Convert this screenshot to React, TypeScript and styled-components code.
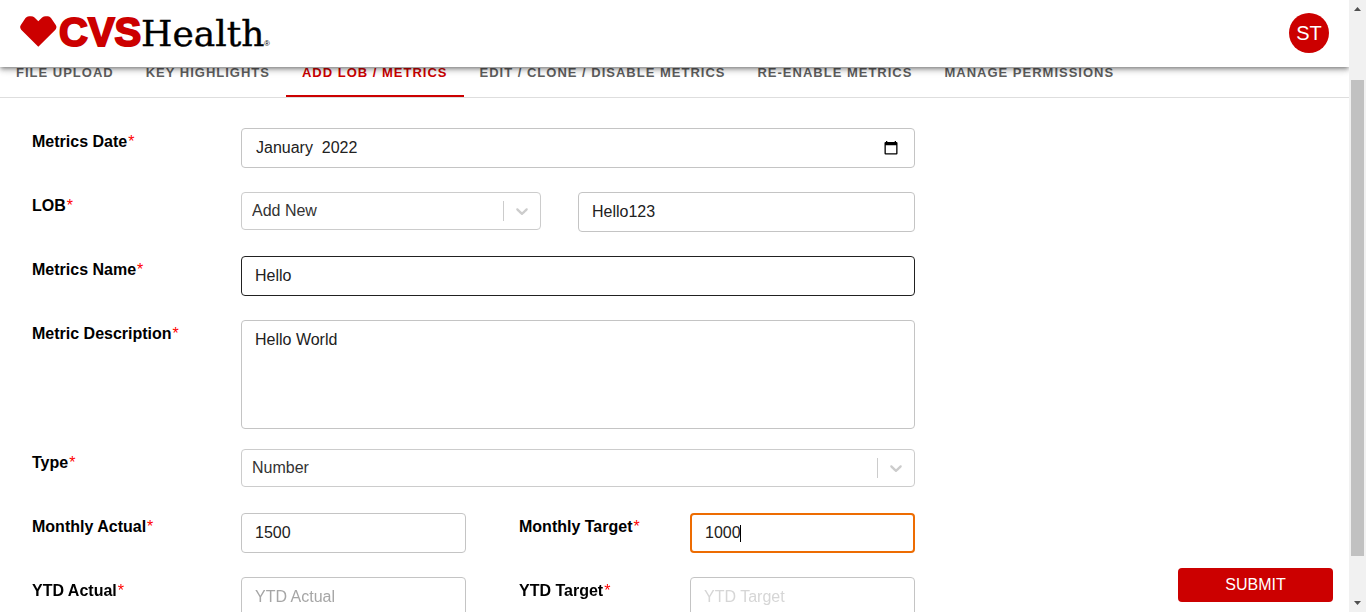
import React, { useEffect, useRef, useState } from "react";
import styled, { createGlobalStyle, css } from "styled-components";

const GlobalStyle = createGlobalStyle`
  *, *::before, *::after { box-sizing: border-box; }
  body {
    margin: 0;
    background: #fff;
    color: #000;
    font-family: "Liberation Sans", Arial, Helvetica, sans-serif;
    font-size: 16px;
  }
`;

const Window = styled.div`
  display: flex;
  height: 100vh;
  overflow: hidden;
`;

const Page = styled.div`
  display: flex;
  flex-direction: column;
  flex: 1;
  min-width: 0;
  overflow: hidden;
`;

const Header = styled.header`
  position: relative;
  z-index: 1;
  display: flex;
  flex: none;
  align-items: center;
  justify-content: space-between;
  height: 67px;
  padding: 0 20px 1px;
  background: #fff;
  box-shadow: 0 2px 4px -1px rgba(0, 0, 0, 0.4), 0 4px 5px 0 rgba(0, 0, 0, 0.14),
    0 1px 10px 0 rgba(0, 0, 0, 0.12);
`;

const LogoLink = styled.a`
  display: block;
  height: 60px;
`;

const Avatar = styled.button`
  width: 40px;
  height: 40px;
  padding: 0;
  border: 0;
  border-radius: 50%;
  background: #c00;
  color: #fff;
  font: inherit;
  font-size: 20px;
`;

const Tabs = styled.nav`
  display: flex;
  flex: none;
  height: 50px;
  margin-top: -19px;
  border-bottom: 1px solid #dedede;
`;

const Tab = styled.button<{ $active?: boolean }>`
  padding: 0 16px;
  border: 0;
  border-top: 2px solid transparent;
  border-bottom: 2px solid ${(p) => (p.$active ? "#c00" : "transparent")};
  background: none;
  color: ${(p) => (p.$active ? "#c00" : "#5f5f5f")};
  font: inherit;
  font-size: 13px;
  font-weight: 700;
  letter-spacing: 1px;
  white-space: nowrap;
`;

const Body = styled.form`
  display: flex;
  flex: 1;
  justify-content: space-between;
  min-height: 0;
  padding: 30px 16px 10px 32px;
`;

const Fields = styled.div`
  display: flex;
  flex: 0 1 883px;
  flex-direction: column;
  gap: 24px;
  min-width: 0;
`;

const Row = styled.div<{ $tall?: boolean }>`
  display: grid;
  flex: none;
  grid-template-columns: 209px 1fr;
  align-items: start;
  height: ${(p) => (p.$tall ? 105 : 40)}px;
`;

const LobFields = styled.div`
  display: grid;
  grid-template-columns: 300fr 337fr;
  align-items: start;
  gap: 37px;
`;

const Pair = styled.div`
  display: grid;
  grid-template-columns: 1fr 53px 171px 1fr;
  align-items: start;

  > label {
    grid-column: 3;
  }
`;

const Label = styled.label`
  font-weight: 700;
  line-height: 28px;
`;

const Star = styled.span`
  margin-left: 1px;
  color: #f00;
  font-weight: 400;
`;

const control = css`
  width: 100%;
  min-width: 0;
  margin: 0;
  border: 1px solid #c4c4c4;
  border-radius: 4px;
  background: #fff;
  color: #212121;
  font: inherit;
  outline: 0;
`;

const Input = styled.input<{ $hovered?: boolean; $fading?: boolean }>`
  ${control}
  height: 40px;
  padding: 0 13px;
  border-color: ${(p) => (p.$hovered ? "#212121" : "#c4c4c4")};

  &::placeholder {
    color: ${(p) => (p.$fading ? "#d6d6d6" : "#a6a6a6")};
    opacity: 1;
  }
  &:focus {
    border: 2px solid #ed6c02;
  }
`;

const TextArea = styled.textarea`
  ${control}
  display: block;
  height: 109px;
  padding: 9px 13px;
  line-height: 19px;
  resize: none;
`;

const Stack = styled.div`
  display: grid;
  align-items: center;

  > * {
    grid-area: 1 / 1;
  }
`;

const MonthInput = styled(Input)`
  padding: 0 40px 0 14px;
`;

const CalendarButton = styled.button`
  display: flex;
  justify-self: end;
  margin-right: 17px;
  padding: 0;
  border: 0;
  background: none;
`;

const CaretInput = styled(Input)`
  caret-color: transparent;
`;

const Caret = styled.span`
  width: 1px;
  height: 17px;
  margin-left: 50px;
  background: #000;
  pointer-events: none;
`;

const Select = styled.select`
  ${control}
  appearance: none;
  height: 38px;
  padding: 0 46px 2px 10px;
  border-color: #ccc;
  color: #333;
`;

const Indicator = styled.span`
  display: flex;
  align-items: center;
  justify-content: center;
  justify-self: end;
  width: 38px;
  height: 20px;
  padding-right: 2px;
  border-left: 1px solid #ccc;
  color: #ccc;
  pointer-events: none;
`;

const Submit = styled.button`
  flex: none;
  align-self: flex-end;
  width: 155px;
  height: 34px;
  border: 0;
  border-radius: 4px;
  background: #c00;
  color: #fff;
  font: inherit;
`;

const Scrollbar = styled.div`
  display: flex;
  flex: none;
  flex-direction: column;
  width: 17px;
  background: #f1f1f1;
`;

const ScrollArrow = styled.svg`
  flex: none;
  width: 17px;
  height: 17px;
  fill: #505050;
`;

const ScrollSpace = styled.div<{ $grow: number }>`
  flex: ${(p) => p.$grow} 1 0;
`;

const ScrollThumb = styled(ScrollSpace)`
  margin: 0 2px;
  background: #c1c1c1;
`;

const tabs = [
  "FILE UPLOAD",
  "KEY HIGHLIGHTS",
  "ADD LOB / METRICS",
  "EDIT / CLONE / DISABLE METRICS",
  "RE-ENABLE METRICS",
  "MANAGE PERMISSIONS",
];

function Logo() {
  return (
    <svg width="252" height="60" viewBox="0 0 252 60" role="img" aria-label="CVS Health">
      <path
        fill="#c00"
        d="M18.3 43.8 L1.2 26.7 Q-.8 24.3 1 21.7 L5.5 15.1 Q7 13.2 9 13.2 H11 Q13 13.2 14.5 14.5 L18.3 18.2 L22.1 14.5 Q23.8 13.2 25.6 13.2 H28 Q29.6 13.2 31 15.1 L35.6 21.7 Q37.4 24.3 35.4 26.7 Z"
      />
      <text
        x="39"
        y="43"
        fill="#c00"
        stroke="#c00"
        strokeWidth="2"
        fontFamily="'Liberation Sans', Arial, sans-serif"
        fontSize="40"
        fontWeight="700"
      >
        CVS
      </text>
      <text
        x="121"
        y="43"
        fill="#000"
        stroke="#000"
        strokeWidth="0.4"
        fontFamily="'DejaVu Serif', serif"
        fontSize="36"
      >
        Health
      </text>
      <text x="244" y="43" fill="#000" fontFamily="'Liberation Sans', sans-serif" fontSize="8">
        ®
      </text>
    </svg>
  );
}

function FieldLabel({ id, children }: { id: string; children: string }) {
  return (
    <Label htmlFor={id}>
      {children}
      <Star>*</Star>
    </Label>
  );
}

function Dropdown({ id, options }: { id: string; options: string[] }) {
  return (
    <Stack>
      <Select id={id}>
        {options.map((o) => (
          <option key={o}>{o}</option>
        ))}
      </Select>
      <Indicator>
        <svg width="20" height="20" viewBox="0 0 20 20" fill="currentColor" aria-hidden="true">
          <path d="M4.516 7.548c0.436-0.446 1.043-0.481 1.576 0l3.908 3.747 3.908-3.747c0.533-0.481 1.141-0.446 1.574 0 0.436 0.445 0.408 1.197 0 1.615-0.406 0.418-4.695 4.502-4.695 4.502-0.217 0.223-0.502 0.335-0.787 0.335s-0.57-0.112-0.789-0.335c0 0-4.287-4.084-4.695-4.502s-0.436-1.17 0-1.615z" />
        </svg>
      </Indicator>
    </Stack>
  );
}

export default function App() {
  const [activeTab, setActiveTab] = useState(2);
  const target = useRef<HTMLInputElement>(null);

  useEffect(() => {
    target.current?.focus({ preventScroll: true });
  }, []);

  return (
    <Window>
      <GlobalStyle />
      <Page>
        <Header>
          <LogoLink href="#">
            <Logo />
          </LogoLink>
          <Avatar type="button">ST</Avatar>
        </Header>
        <Tabs>
          {tabs.map((name, i) => (
            <Tab key={name} type="button" $active={i === activeTab} onClick={() => setActiveTab(i)}>
              {name}
            </Tab>
          ))}
        </Tabs>
        <Body onSubmit={(e) => e.preventDefault()}>
          <Fields>
            <Row>
              <FieldLabel id="date">Metrics Date</FieldLabel>
              <Stack>
                <MonthInput id="date" defaultValue="January  2022" />
                <CalendarButton type="button" aria-label="Choose month">
                  <svg width="14" height="14" viewBox="0 0 14 14" aria-hidden="true">
                    <path
                      fillRule="evenodd"
                      d="M2 0h1.3v1h7.4V0H12v1h.4q1.1 0 1.1 1.1v10.4q0 1.1-1.1 1.1H1.6q-1.1 0-1.1-1.1V2.1Q.5 1 1.6 1H2zM1.8 4.3v8h10.4v-8z"
                    />
                  </svg>
                </CalendarButton>
              </Stack>
            </Row>
            <Row>
              <FieldLabel id="lob">LOB</FieldLabel>
              <LobFields>
                <Dropdown id="lob" options={["Add New"]} />
                <Input aria-label="New LOB" defaultValue="Hello123" />
              </LobFields>
            </Row>
            <Row>
              <FieldLabel id="name">Metrics Name</FieldLabel>
              <Input id="name" defaultValue="Hello" $hovered />
            </Row>
            <Row $tall>
              <FieldLabel id="description">Metric Description</FieldLabel>
              <TextArea id="description" defaultValue="Hello World" />
            </Row>
            <Row>
              <FieldLabel id="type">Type</FieldLabel>
              <Dropdown id="type" options={["Number", "Percentage"]} />
            </Row>
            <Row>
              <FieldLabel id="monthly-actual">Monthly Actual</FieldLabel>
              <Pair>
                <Input id="monthly-actual" defaultValue="1500" />
                <FieldLabel id="monthly-target">Monthly Target</FieldLabel>
                <Stack>
                  <CaretInput id="monthly-target" ref={target} defaultValue="1000" />
                  <Caret />
                </Stack>
              </Pair>
            </Row>
            <Row>
              <FieldLabel id="ytd-actual">YTD Actual</FieldLabel>
              <Pair>
                <Input id="ytd-actual" placeholder="YTD Actual" />
                <FieldLabel id="ytd-target">YTD Target</FieldLabel>
                <Input id="ytd-target" placeholder="YTD Target" $fading />
              </Pair>
            </Row>
          </Fields>
          <Submit type="submit">SUBMIT</Submit>
        </Body>
      </Page>
      <Scrollbar aria-hidden="true">
        <ScrollArrow viewBox="0 0 17 17">
          <path d="M5 11 L8.5 7 L12 11 Z" />
        </ScrollArrow>
        <ScrollSpace $grow={63} />
        <ScrollThumb $grow={476} />
        <ScrollSpace $grow={39} />
        <ScrollArrow viewBox="0 0 17 17">
          <path d="M5 6 L8.5 10 L12 6 Z" />
        </ScrollArrow>
      </Scrollbar>
    </Window>
  );
}
